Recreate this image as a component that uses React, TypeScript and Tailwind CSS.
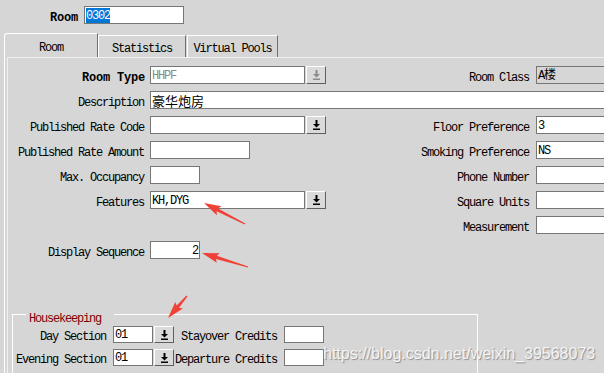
import React from "react";

const fam = "font-['Liberation_Mono','Noto_Sans_CJK_SC',monospace]";
const txt = "text-[12px] tracking-[-1.2px]";
const boldTxt = "text-[12px] font-bold tracking-[-0.2px]";

function DropBtn({ disabled, small }: { disabled?: boolean; small?: boolean }) {
  return (
    <div
      className={`ml-[1px] flex w-[20px] shrink-0 items-center justify-center border border-t-white border-l-white border-b-[#5f5f5f] border-r-[#5f5f5f] bg-[#dadada] ${
        small ? "h-[17px]" : "h-[18px]"
      }`}
    >
      <svg width="9" height="10" viewBox="0 0 9 10">
        <g fill={disabled ? "#8c8c8c" : "#000"}>
          <rect x="3.5" y="0" width="2" height="4" />
          <polygon points="1,4 8,4 4.5,7.5" />
          <rect x="1" y="8.5" width="7" height="1.5" />
        </g>
      </svg>
    </div>
  );
}

function Field({
  w,
  value = "",
  extra = "",
  bg = "bg-white",
  small,
}: {
  w: string;
  value?: string;
  extra?: string;
  bg?: string;
  small?: boolean;
}) {
  return (
    <div
      className={`${w} ${bg} ${small ? "h-[17px]" : "h-[18px]"} flex shrink-0 items-center overflow-hidden whitespace-nowrap border border-[#767676] px-[1px] pt-[1px] ${txt} ${extra}`}
    >
      {value}
    </div>
  );
}

function LLabel({ children, bold }: { children: React.ReactNode; bold?: boolean }) {
  return (
    <div
      className={`w-[142px] shrink-0 whitespace-nowrap pt-[5px] text-right ${
        bold ? `${boldTxt} pr-[5px]` : `${txt} pr-[6px]`
      }`}
    >
      {children}
    </div>
  );
}

function RLabel({ children }: { children: React.ReactNode }) {
  return <div className={`w-[210px] shrink-0 whitespace-nowrap pr-[7px] pt-[5px] text-right ${txt}`}>{children}</div>;
}

function HLabel({ children, w }: { children: React.ReactNode; w: string }) {
  return <div className={`${w} shrink-0 whitespace-nowrap pr-[7px] pt-[4px] text-right ${txt}`}>{children}</div>;
}

function arrow(tx: number, ty: number, px: number, py: number) {
  const dx = px - tx;
  const dy = py - ty;
  const len = Math.hypot(dx, dy);
  const ux = dx / len;
  const uy = dy / len;
  const nx = -uy;
  const ny = ux;
  const H = 15;
  const W = 5;
  const bx = px - ux * H;
  const by = py - uy * H;
  const pts = [
    [tx + nx * 0.6, ty + ny * 0.6],
    [bx + nx * 1.6, by + ny * 1.6],
    [bx + nx * W - ux * 2, by + ny * W - uy * 2],
    [px, py],
    [bx - nx * W - ux * 2, by - ny * W - uy * 2],
    [bx - nx * 1.6, by - ny * 1.6],
    [tx - nx * 0.6, ty - ny * 0.6],
  ];
  return pts.map((p) => `${p[0].toFixed(1)},${p[1].toFixed(1)}`).join(" ");
}

export default function App() {
  return (
    <div className={`relative h-[373px] w-[604px] overflow-hidden bg-[#d6d6d6] text-black ${fam}`}>
      {/* Top room field */}
      <div className="flex h-[33px] items-start pt-[6px]">
        <div className={`w-[78px] pt-[3px] text-right leading-[18px] ${boldTxt}`}>Room</div>
        <div className="ml-[6px] flex h-[18px] w-[100px] items-center border border-[#767676] bg-white pl-[1px]">
          <span className={`bg-[#0078d7] pt-[1px] leading-[14px] text-white ${txt}`}>0302</span>
        </div>
      </div>

      {/* Tabs */}
      <div className={`flex h-[24px] items-end pl-[4px] ${txt}`}>
        <div className="flex h-[24px] w-[94px] items-center justify-center rounded-tl-[3px] border-l border-r border-t border-l-white border-r-[#6f6f6f] border-t-white pt-[5px]">
          Room
        </div>
        <div className="flex h-[22px] w-[88px] items-center justify-center border-l border-r border-t border-l-white border-r-[#6f6f6f] border-t-white pt-[5px]">
          Statistics
        </div>
        <div className="ml-[1px] flex h-[22px] w-[91px] items-center justify-center border-l border-r border-t border-l-white border-r-[#6f6f6f] border-t-white pt-[5px]">
          Virtual Pools
        </div>
      </div>

      {/* Panel */}
      <div className="ml-[4px] h-[316px] border-l border-white pl-[2px]">
        <div className="h-full border-l border-t border-[#f0f0f0] pt-[8px]">
          <div className="flex flex-col gap-[7px]">
            <div className="flex h-[18px] items-center">
              <div className="flex w-[318px] shrink-0 items-center">
                <LLabel bold>Room Type</LLabel>
                <Field w="w-[155px]" value="HHPF" extra="text-[#8a8a8a]" />
                <DropBtn disabled />
              </div>
              <RLabel>Room Class</RLabel>
              <Field w="w-[80px]" value="A楼" bg="bg-[#d6d6d6]" />
            </div>

            <div className="flex h-[18px] items-center">
              <LLabel>Description</LLabel>
              <Field w="w-[460px]" value="豪华炮房" extra="text-[13px] tracking-normal font-['Noto_Sans_CJK_SC',sans-serif]" />
            </div>

            <div className="flex h-[18px] items-center">
              <div className="flex w-[318px] shrink-0 items-center">
                <LLabel>Published Rate Code</LLabel>
                <Field w="w-[155px]" />
                <DropBtn />
              </div>
              <RLabel>Floor Preference</RLabel>
              <Field w="w-[80px]" value="3" />
            </div>

            <div className="flex h-[18px] items-center">
              <div className="flex w-[318px] shrink-0 items-center">
                <LLabel>Published Rate Amount</LLabel>
                <Field w="w-[100px]" />
              </div>
              <RLabel>Smoking Preference</RLabel>
              <Field w="w-[80px]" value="NS" />
            </div>

            <div className="flex h-[18px] items-center">
              <div className="flex w-[318px] shrink-0 items-center">
                <LLabel>Max. Occupancy</LLabel>
                <Field w="w-[50px]" />
              </div>
              <RLabel>Phone Number</RLabel>
              <Field w="w-[80px]" />
            </div>

            <div className="flex h-[18px] items-center">
              <div className="flex w-[318px] shrink-0 items-center">
                <LLabel>Features</LLabel>
                <Field w="w-[155px]" value="KH,DYG" />
                <DropBtn />
              </div>
              <RLabel>Square Units</RLabel>
              <Field w="w-[80px]" />
            </div>

            <div className="flex h-[18px] items-center">
              <div className="w-[318px] shrink-0" />
              <RLabel>Measurement</RLabel>
              <Field w="w-[80px]" />
            </div>

            <div className="flex h-[18px] items-center">
              <LLabel>Display Sequence</LLabel>
              <Field w="w-[50px]" value="2" extra="justify-end" />
            </div>
          </div>

          {/* Housekeeping group */}
          <div className="relative ml-[4px] mt-[55px] h-[70px] w-[466px] border-l border-r border-t border-white pt-[11px]">
            <div
              className={`absolute left-[13px] top-[-2px] h-[12px] w-[88px] bg-[#d6d6d6] pl-[3px] leading-[12px] text-[#800000] ${txt}`}
            >
              Housekeeping
            </div>
            <div className="flex flex-col gap-[6px]">
              <div className="flex h-[17px] items-center">
                <HLabel w="w-[100px]">Day Section</HLabel>
                <Field w="w-[40px]" value="01" small />
                <DropBtn small />
                <HLabel w="w-[110px]">Stayover Credits</HLabel>
                <Field w="w-[40px]" small />
              </div>
              <div className="flex h-[17px] items-center">
                <HLabel w="w-[100px]">Evening Section</HLabel>
                <Field w="w-[40px]" value="01" small />
                <DropBtn small />
                <HLabel w="w-[110px]">Departure Credits</HLabel>
                <Field w="w-[40px]" small />
              </div>
            </div>
          </div>
        </div>
      </div>

      {/* Watermark */}
      <div className="absolute left-[323px] top-[345px] whitespace-nowrap font-['Liberation_Sans',Arial,sans-serif] text-[16px] leading-[18px] text-[#f4f4f4] [text-shadow:1px_1px_1px_rgba(0,0,0,0.35)]">
        https://blog.csdn.net/weixin_39568073
      </div>

      {/* Red annotation arrows */}
      <svg className="pointer-events-none absolute left-0 top-0" width="604" height="373">
        <g fill="#ef4135">
          <polygon points={arrow(245, 224, 204, 203)} />
          <polygon points={arrow(248, 267, 202, 253)} />
          <polygon points={arrow(187, 296, 168, 318)} />
        </g>
      </svg>
    </div>
  );
}
